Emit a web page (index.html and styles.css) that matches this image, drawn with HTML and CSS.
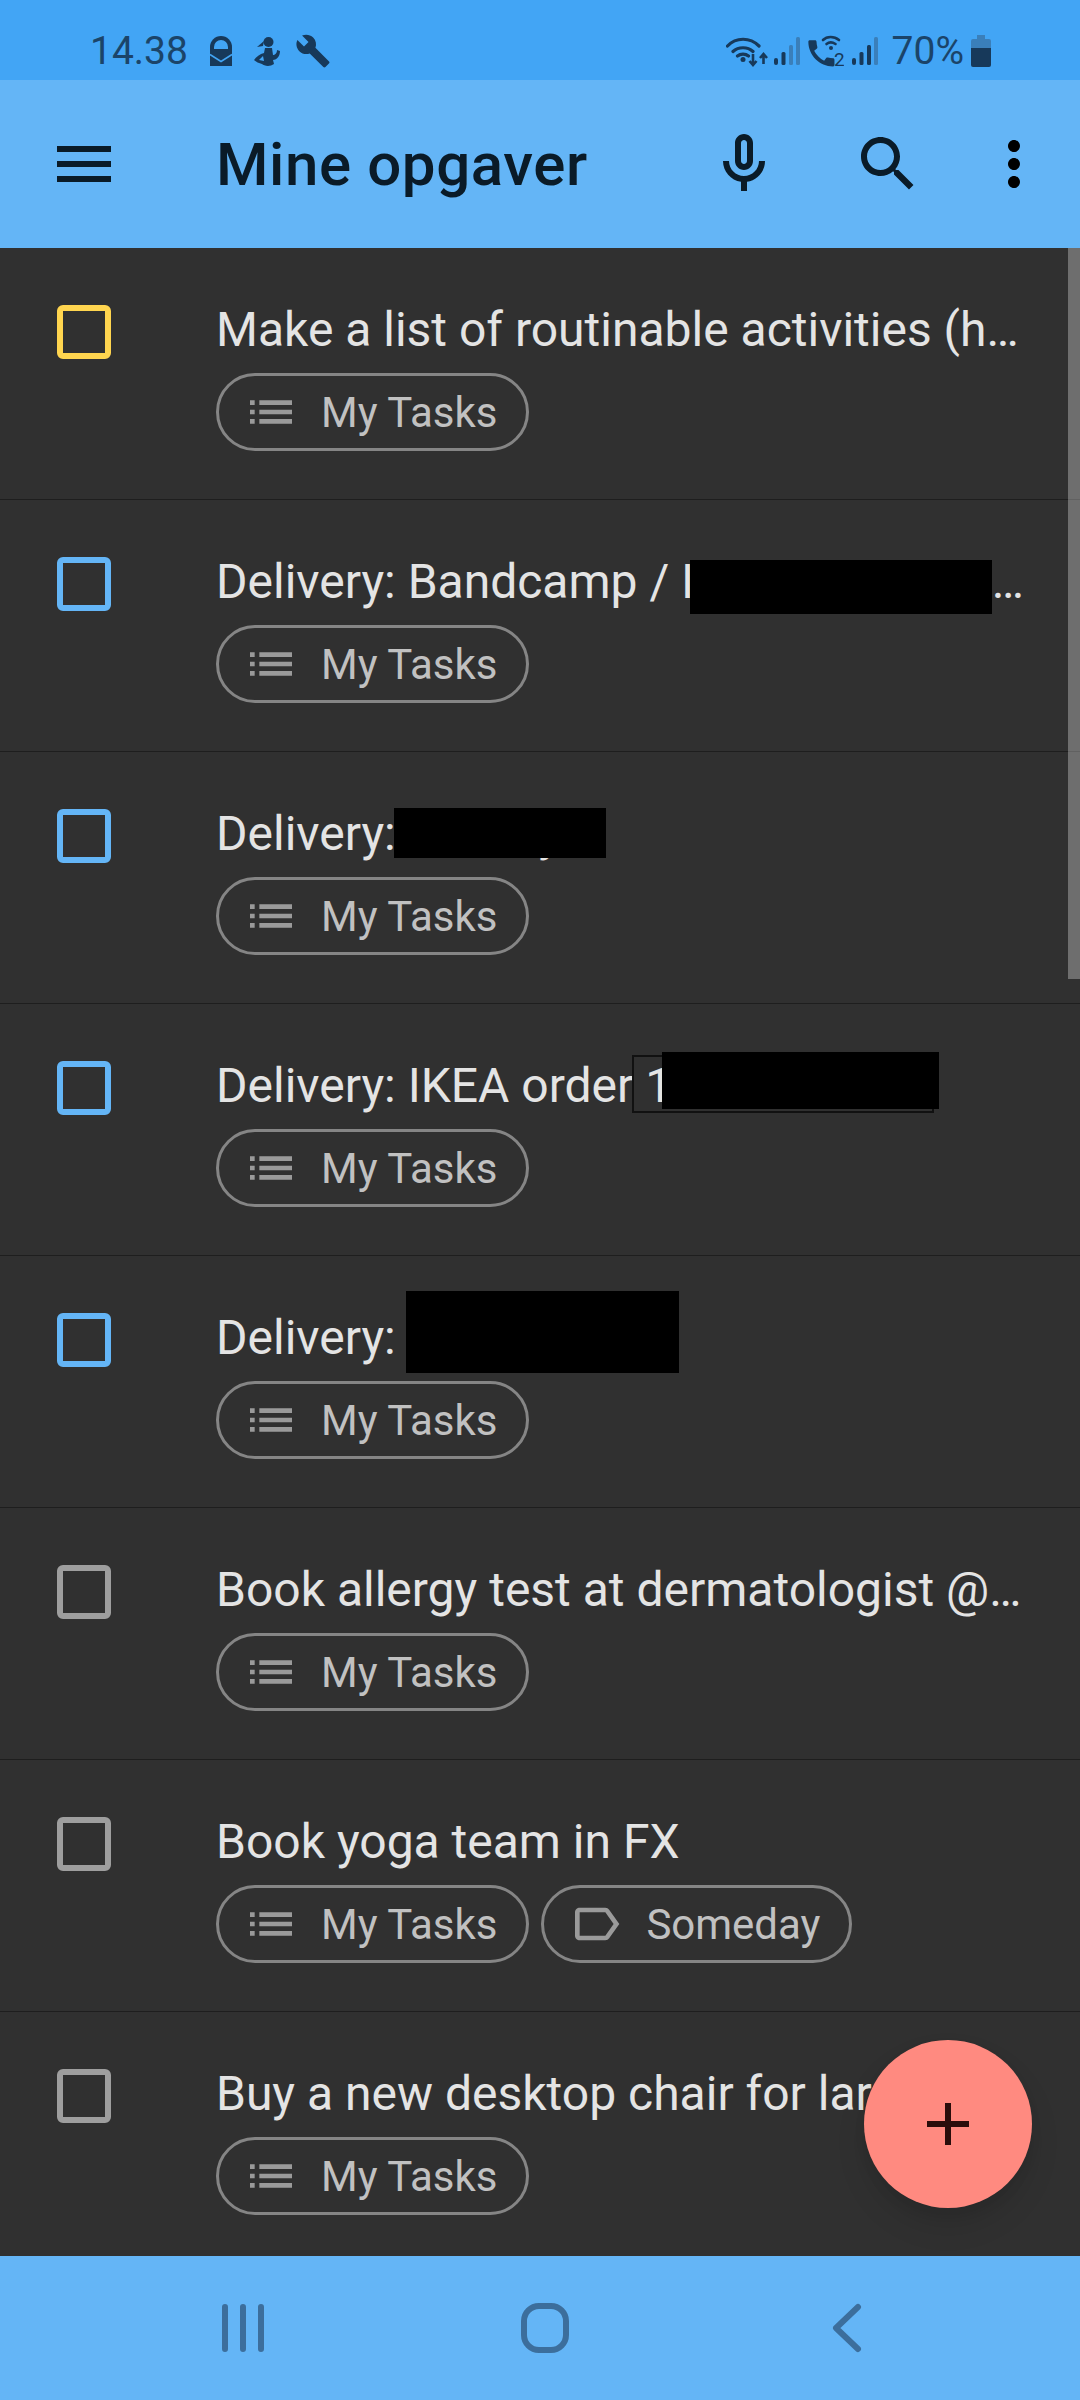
FILE: index.html
```html
<!DOCTYPE html>
<html>
<head>
    <title>Mine opgaver</title>
    <link rel="stylesheet" href="styles.css">
</head>
<body>
    <svg class="icon-defs" width="0" height="0">
        <symbol id="ic-list" viewBox="0 0 24 24"><path d="M3 13h2v-2H3v2zm0 4h2v-2H3v2zm0-8h2V7H3v2zm4 4h14v-2H7v2zm0 4h14v-2H7v2zM7 7v2h14V7H7z"/></symbol>
        <symbol id="ic-label" viewBox="0 0 24 24"><path d="M17.63 5.84C17.27 5.33 16.67 5 16 5L5 5.01C3.9 5.01 3 5.9 3 7v10c0 1.1.9 1.99 2 1.99L16 19c.67 0 1.27-.33 1.63-.84L22 12l-4.37-6.16zM16 17H5V7h11l3.55 5L16 17z"/></symbol>
    </svg>

    <div class="status-bar">
        <span class="clock">14.38</span>
        <svg class="st-mail" viewBox="0 0 22 30"><path d="M0 11a11 11 0 0 1 22 0v19H0z"/><path class="st-cut" d="M4 13v-2a7 7 0 0 1 14 0v2z"/><path class="st-line" d="M0 18.500l11 7 11-7"/></svg>
        <svg class="st-person" viewBox="0 0 26 30"><circle cx="14.500" cy="6" r="5"/><path d="M10 5L3 11l6-1z"/><path d="M11 12h7l1 7c2 0 4-1.500 4-5l3 1c0 6-4 9-7 9l1 4c-4 3-10 2-12 0-3-1-6-2-8-4 2-3 6-6 10-7zM9 20l-4 4 5 1z" fill-rule="evenodd"/></svg>
        <svg class="st-wrench" viewBox="0 0 24 24"><path d="M22.700 19l-9.100-9.100c.9-2.300.4-5-1.500-6.900-2-2-5-2.400-7.400-1.300L9 6 6 9 1.600 4.700C.4 7.100.9 10.100 2.900 12.100c1.900 1.900 4.600 2.400 6.900 1.500l9.100 9.100c.4.4 1 .4 1.400 0l2.300-2.300c.5-.4.5-1.100.1-1.400z"/></svg>
        <span class="status-spacer"></span>
        <svg class="st-wifi" viewBox="0 0 42 32">
            <path class="st-stroke" d="M1.500 11C10 2 24 2 33 11M7 16.500c5.500-5 14.500-5 20 0M11.500 21c3-2.500 8-2.500 11 0"/>
            <circle cx="17" cy="24.500" r="2.500"/>
            <path class="st-arrow" d="M27 19v10M23.500 26l3.500 4 3.500-4M37.500 29v-9M34 23l3.500-4 3.500 4"/>
        </svg>
        <svg class="st-signal" viewBox="0 0 26 28">
            <rect x="0" y="21" width="4" height="7" rx="2"/>
            <rect x="7.500" y="15" width="4" height="13" rx="1.500"/>
            <rect class="st-dim" x="15" y="8" width="4" height="20" rx="1.500"/>
            <rect class="st-dim" x="22" y="0" width="4" height="28" rx="1.500"/>
        </svg>
        <svg class="st-call" viewBox="0 0 36 32">
            <path transform="translate(-4 1) scale(1.450)" d="M20.010 15.380c-1.230 0-2.420-.2-3.530-.56-.35-.12-.74-.03-1.010.24l-1.570 1.970c-2.830-1.350-5.480-3.900-6.890-6.830l1.950-1.660c.27-.28.35-.67.24-1.020-.37-1.110-.56-2.300-.56-3.530 0-.54-.45-.99-.99-.99H4.190C3.650 3 3 3.240 3 3.990 3 13.280 10.730 21 20.010 21c.71 0 .99-.63.99-1.180v-3.450c0-.54-.45-.99-.99-.99z"/>
            <path class="st-stroke thin" d="M15 5c4-4 11-4 16 0M18.500 9c2.500-2 6-2 9 0"/>
            <circle cx="23" cy="13" r="2"/>
            <text class="st-sim" x="26" y="31">2</text>
        </svg>
        <svg class="st-signal second" viewBox="0 0 26 28">
            <rect x="0" y="21" width="4" height="7" rx="2"/>
            <rect x="7.500" y="15" width="4" height="13" rx="1.500"/>
            <rect x="15" y="8" width="4" height="20" rx="1.500"/>
            <rect class="st-dim" x="22" y="0" width="4" height="28" rx="1.500"/>
        </svg>
        <span class="battery-text">70%</span>
        <svg class="st-battery" viewBox="0 0 20 32">
            <path class="st-dim" d="M6 0h8v4h4a2 2 0 0 1 2 2v7H0V6a2 2 0 0 1 2-2h4z"/>
            <path d="M0 13h20v17a2 2 0 0 1-2 2H2a2 2 0 0 1-2-2z"/>
        </svg>
    </div>

    <header class="app-bar">
        <svg class="bar-icon menu-icon" viewBox="0 0 24 24"><path d="M3 18h18v-2H3v2zm0-5h18v-2H3v2zm0-7v2h18V6H3z"/></svg>
        <h1>Mine opgaver</h1>
        <svg class="bar-icon mic-icon" viewBox="0 0 24 24"><path d="M12 14c1.660 0 3-1.340 3-3V5c0-1.660-1.340-3-3-3S9 3.340 9 5v6c0 1.660 1.340 3 3 3zm-1-9c0-.55.45-1 1-1s1 .45 1 1v6c0 .55-.45 1-1 1s-1-.45-1-1V5zm6 6c0 2.760-2.240 5-5 5s-5-2.240-5-5H5c0 3.530 2.610 6.430 6 6.920V21h2v-3.080c3.390-.49 6-3.390 6-6.920h-2z"/></svg>
        <svg class="bar-icon search-icon" viewBox="0 0 24 24"><path d="M15.500 14h-.79l-.28-.27C15.410 12.590 16 11.110 16 9.500 16 5.910 13.090 3 9.500 3S3 5.910 3 9.500 5.910 16 9.500 16c1.610 0 3.090-.59 4.230-1.570l.27.28v.79l5 4.990L20.490 19l-4.990-5zm-6 0C7.010 14 5 11.990 5 9.500S7.010 5 9.500 5 14 7.010 14 9.500 11.990 14 9.500 14z"/></svg>
        <svg class="bar-icon more-icon" viewBox="0 0 24 24"><path d="M12 8c1.100 0 2-.9 2-2s-.9-2-2-2-2 .9-2 2 .9 2 2 2zm0 2c-1.100 0-2 .9-2 2s.9 2 2 2 2-.9 2-2-.9-2-2-2zm0 6c-1.100 0-2 .9-2 2s.9 2 2 2 2-.9 2-2-.9-2-2-2z"/></svg>
    </header>

    <main class="content">
        <ul class="task-list">
            <li class="task-row">
                <span class="check check-yellow"></span>
                <div class="task-body">
                    <div class="task-title">Make a list of routinable activities (habits and chores)</div>
                    <div class="chips">
                        <span class="chip"><svg class="chip-icon"><use href="#ic-list"/></svg>My Tasks</span>
                    </div>
                </div>
            </li>
            <li class="task-row">
                <span class="check check-blue"></span>
                <div class="task-body">
                    <div class="task-title">Delivery: Bandcamp / I xxxxxxxxxxxx…</div>
                    <div class="chips">
                        <span class="chip"><svg class="chip-icon"><use href="#ic-list"/></svg>My Tasks</span>
                    </div>
                </div>
                <span class="redact redact-bandcamp"></span>
            </li>
            <li class="task-row">
                <span class="check check-blue"></span>
                <div class="task-body">
                    <div class="task-title">Delivery: xxxxx y</div>
                    <div class="chips">
                        <span class="chip"><svg class="chip-icon"><use href="#ic-list"/></svg>My Tasks</span>
                    </div>
                </div>
                <span class="redact redact-short"></span>
            </li>
            <li class="task-row">
                <span class="check check-blue"></span>
                <div class="task-body">
                    <div class="task-title">Delivery: IKEA order 1</div>
                    <div class="chips">
                        <span class="chip"><svg class="chip-icon"><use href="#ic-list"/></svg>My Tasks</span>
                    </div>
                </div>
                <span class="redact-outline"></span>
                <span class="redact redact-ikea"></span>
            </li>
            <li class="task-row">
                <span class="check check-blue"></span>
                <div class="task-body">
                    <div class="task-title">Delivery:</div>
                    <div class="chips">
                        <span class="chip"><svg class="chip-icon"><use href="#ic-list"/></svg>My Tasks</span>
                    </div>
                </div>
                <span class="redact redact-tall"></span>
            </li>
            <li class="task-row">
                <span class="check"></span>
                <div class="task-body">
                    <div class="task-title">Book allergy test at dermatologist @the hospital</div>
                    <div class="chips">
                        <span class="chip"><svg class="chip-icon"><use href="#ic-list"/></svg>My Tasks</span>
                    </div>
                </div>
            </li>
            <li class="task-row">
                <span class="check"></span>
                <div class="task-body">
                    <div class="task-title">Book yoga team in FX</div>
                    <div class="chips">
                        <span class="chip"><svg class="chip-icon"><use href="#ic-list"/></svg>My Tasks</span>
                        <span class="chip"><svg class="chip-icon"><use href="#ic-label"/></svg>Someday</span>
                    </div>
                </div>
            </li>
            <li class="task-row">
                <span class="check"></span>
                <div class="task-body">
                    <div class="task-title">Buy a new desktop chair for large desk</div>
                    <div class="chips">
                        <span class="chip"><svg class="chip-icon"><use href="#ic-list"/></svg>My Tasks</span>
                    </div>
                </div>
            </li>
        </ul>
        <div class="scroll-thumb"></div>
        <button type="button" class="fab">
            <svg viewBox="0 0 42 42"><path d="M18 0h6v18h18v6H24v18h-6V24H0v-6h18z"/></svg>
        </button>
    </main>

    <nav class="nav-bar">
        <svg class="nav-icon nav-recents" viewBox="0 0 46 50"><path d="M5 4v42M23 4v42M41 4v42"/></svg>
        <svg class="nav-icon nav-home" viewBox="0 0 48 50"><rect x="3" y="3" width="42" height="44" rx="15"/></svg>
        <svg class="nav-icon nav-back" viewBox="0 0 30 50"><path d="M26 4L4 25l22 21"/></svg>
    </nav>
</body>
</html>
```

FILE: styles.css
```css
* {
    box-sizing: border-box;
}
html, body {
    margin: 0;
    height: 2400px;
    overflow: hidden;
}
body {
    display: flex;
    flex-direction: column;
    font-family: Roboto, "Liberation Sans", sans-serif;
    background-color: #303030;
}
.icon-defs {
    position: absolute;
}

/* status bar */
.status-bar {
    height: 80px;
    flex: none;
    display: flex;
    align-items: center;
    padding: 21px 89px 0 90px;
    background-color: #42a5f5;
    color: #1b4469;
    fill: #17395a;
}
.clock, .battery-text {
    font-size: 39px;
    line-height: 40px;
}
.status-spacer {
    flex: 1;
}
.st-mail {
    width: 22px;
    height: 30px;
    margin-left: 22px;
}
.st-cut {
    fill: #42a5f5;
}
.st-line {
    fill: none;
    stroke: #42a5f5;
    stroke-width: 1.5;
}
.st-person {
    width: 26px;
    height: 30px;
    margin-left: 22px;
}
.st-wrench {
    width: 36px;
    height: 36px;
    margin-left: 15px;
}
.st-wifi {
    width: 42px;
    height: 32px;
}
.st-stroke {
    fill: none;
    stroke: #17395a;
    stroke-width: 3.2;
    stroke-linecap: round;
}
.st-stroke.thin {
    stroke-width: 2.6;
}
.st-arrow {
    fill: none;
    stroke: #17395a;
    stroke-width: 2.6;
}
.st-signal {
    width: 26px;
    height: 28px;
    margin-left: 6px;
}
.st-signal.second {
    margin-left: 8px;
}
.st-dim {
    fill: #3a7fba;
}
.st-call {
    width: 36px;
    height: 32px;
    margin-left: 8px;
}
.st-sim {
    font-size: 19px;
    font-family: Roboto, sans-serif;
}
.battery-text {
    margin-left: 14px;
}
.st-battery {
    width: 20px;
    height: 32px;
    margin-left: 7px;
}

/* app bar */
.app-bar {
    height: 168px;
    flex: none;
    display: flex;
    align-items: center;
    padding: 0 30px 0 48px;
    background-color: #64b5f6;
}
.app-bar h1 {
    flex: 1;
    margin: 0 0 0 96px;
    font-size: 60px;
    font-weight: 500;
    letter-spacing: 0.6px;
    color: #0a1b28;
}
.bar-icon {
    width: 72px;
    height: 72px;
    fill: #0a1b28;
}
.search-icon {
    margin: 0 54px 0 72px;
}
.more-icon {
    fill: #000;
}

/* list */
.content {
    position: relative;
    flex: 1;
    min-height: 0;
    overflow: hidden;
}
.task-list {
    list-style: none;
    margin: 0;
    padding: 0;
}
.task-row {
    position: relative;
    display: flex;
    height: 252px;
    padding: 57px 0 0 57px;
    border-bottom: 1px solid #1e1e1e;
}
.check {
    flex: none;
    width: 54px;
    height: 54px;
    border: 6px solid #9e9e9e;
    border-radius: 6px;
}
.check-yellow {
    border-color: #ffd54f;
}
.check-blue {
    border-color: #64b5f6;
}
.task-body {
    width: 812px;
    margin-left: 105px;
}
.task-title {
    margin-top: -7px;
    font-size: 48px;
    line-height: 64px;
    color: #e4e4e4;
    white-space: nowrap;
    overflow: hidden;
    text-overflow: ellipsis;
}
.chips {
    display: flex;
    gap: 12px;
    margin-top: 11px;
}
.chip {
    display: flex;
    align-items: center;
    height: 78px;
    padding: 0 29px 0 24px;
    border: 3px solid #858585;
    border-radius: 39px;
    font-size: 42px;
    color: #c1c1c1;
}
.chip-icon {
    width: 56px;
    height: 56px;
    margin-right: 22px;
    fill: #9a9a9a;
}

/* black bars over private text */
.redact {
    position: absolute;
    background-color: #000;
}
.redact-bandcamp {
    top: 60px;
    left: 690px;
    width: 302px;
    height: 54px;
}
.redact-short {
    top: 56px;
    left: 394px;
    width: 212px;
    height: 50px;
}
.redact-ikea {
    top: 48px;
    left: 662px;
    width: 277px;
    height: 57px;
}
.redact-outline {
    position: absolute;
    top: 51px;
    left: 632px;
    width: 302px;
    height: 58px;
    border: 2px solid #111;
}
.redact-tall {
    top: 35px;
    left: 406px;
    width: 273px;
    height: 82px;
}

.scroll-thumb {
    position: absolute;
    top: 0;
    right: 0;
    width: 12px;
    height: 731px;
    background-color: rgba(255, 255, 255, 0.3);
}
.fab {
    position: absolute;
    right: 48px;
    bottom: 48px;
    display: flex;
    align-items: center;
    justify-content: center;
    width: 168px;
    height: 168px;
    padding: 0;
    border: none;
    border-radius: 50%;
    background-color: #ff8a80;
    box-shadow: 0 18px 30px rgba(0, 0, 0, 0.1), 0 6px 12px rgba(0, 0, 0, 0.06);
}
.fab svg {
    width: 42px;
    height: 42px;
    fill: #2a0d0b;
}

/* bottom navigation */
.nav-bar {
    height: 144px;
    flex: none;
    display: grid;
    grid-template-columns: repeat(3, 302px);
    justify-items: center;
    align-items: center;
    padding-left: 92px;
    background-color: #64b5f6;
}
.nav-icon {
    height: 50px;
    fill: none;
    stroke: #3c6e9c;
    stroke-width: 6;
    stroke-linecap: round;
    stroke-linejoin: round;
}
.nav-recents {
    width: 46px;
}
.nav-home {
    width: 48px;
}
.nav-back {
    width: 30px;
}
```
